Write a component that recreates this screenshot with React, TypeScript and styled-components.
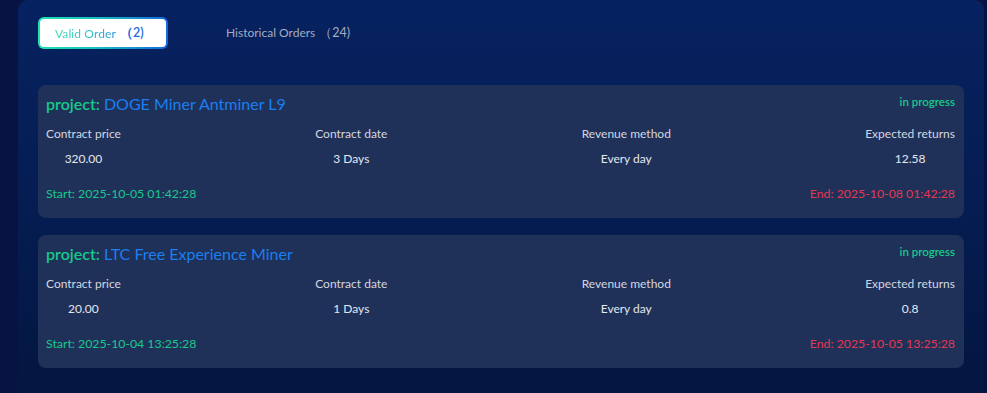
import React from "react";
import styled, { createGlobalStyle } from "styled-components";

const Global = createGlobalStyle`
  html, body { margin: 0; padding: 0; background: #081445; }
  body { font-family: "Lato", "Noto Sans", sans-serif; }
  * { box-sizing: border-box; }
`;

const Page = styled.div`
  display: flex;
  width: 987px;
  height: 393px;
  overflow: hidden;
  background: #071443;
  padding-left: 18px;
  padding-right: 3px;
`;

const Panel = styled.div`
  flex: 1;
  border-radius: 10px 10px 0 0;
  background: linear-gradient(180deg, #072261 0%, #051d52 50%, #041641 100%);
  padding: 17px 20px 0 20px;
`;

const Tabs = styled.div`
  display: flex;
  align-items: center;
  gap: 58px;
  height: 32px;
`;

const ActiveTab = styled.div`
  width: 130px;
  height: 32px;
  border-radius: 6px;
  padding: 2px;
  background: linear-gradient(90deg, #1fe3ad 0%, #17b9c4 50%, #1766e0 100%);
`;

const ActiveInner = styled.div`
  height: 100%;
  border-radius: 4px;
  background: #ffffff;
  display: flex;
  align-items: center;
  padding-left: 15px;
  font-size: 12px;
  letter-spacing: 0.1px;
`;

const GradText = styled.span`
  background: linear-gradient(90deg, #34d9b3 0%, #2bbfcc 60%, #1f8ee0 100%);
  -webkit-background-clip: text;
  background-clip: text;
  color: transparent;
`;

const Count = styled.span<{ $active?: boolean }>`
  margin-left: 4px;
  color: ${(p) => (p.$active ? "#1a6be0" : "#a3acc0")};
  font-size: 12.5px;
  font-weight: ${(p) => (p.$active ? 600 : 400)};
`;

const Tab = styled.div`
  font-size: 12px;
  color: #a3acc0;
`;

const List = styled.div`
  margin-top: 36px;
  display: flex;
  flex-direction: column;
  gap: 17px;
`;

const Card = styled.div`
  background: #1f3159;
  border-radius: 8px;
  padding: 8px 9px 12px 8px;
  height: 133px;
  display: flex;
  flex-direction: column;
`;

const Head = styled.div`
  display: flex;
  justify-content: space-between;
  align-items: flex-start;
  height: 27px;
`;

const Title = styled.div`
  font-size: 16px;
  color: #1a7ff0;
  padding-top: 1px;
`;

const ProjectLabel = styled.span`
  color: #17c98a;
  font-weight: 600;
`;

const Status = styled.div`
  font-size: 11.5px;
  color: #17c98a;
  font-weight: 600;
  padding-top: 2px;
`;

const Stats = styled.div`
  display: flex;
  justify-content: space-between;
  margin-top: 7px;
`;

const Stat = styled.div`
  display: flex;
  flex-direction: column;
  align-items: center;
  gap: 11px;
`;

const Label = styled.div`
  font-size: 12px;
  color: #d3d7e0;
  line-height: 14px;
`;

const Value = styled.div`
  font-size: 12px;
  color: #e4e7ee;
  line-height: 14px;
`;

const Foot = styled.div`
  display: flex;
  justify-content: space-between;
  margin-top: 21px;
  font-size: 12.3px;
  line-height: 14px;
`;

const Start = styled.span`
  color: #18c98b;
`;

const End = styled.span`
  color: #e5384f;
`;

type Order = {
  name: string;
  price: string;
  days: string;
  method: string;
  returns: string;
  start: string;
  end: string;
};

const orders: Order[] = [
  {
    name: "DOGE Miner Antminer L9",
    price: "320.00",
    days: "3 Days",
    method: "Every day",
    returns: "12.58",
    start: "2025-10-05 01:42:28",
    end: "2025-10-08 01:42:28",
  },
  {
    name: "LTC Free Experience Miner",
    price: "20.00",
    days: "1 Days",
    method: "Every day",
    returns: "0.8",
    start: "2025-10-04 13:25:28",
    end: "2025-10-05 13:25:28",
  },
];

export default function App() {
  return (
    <>
      <Global />
      <Page>
        <Panel>
          <Tabs>
            <ActiveTab>
              <ActiveInner>
                <GradText>Valid Order</GradText>
                <Count $active>（2)</Count>
              </ActiveInner>
            </ActiveTab>
            <Tab>
              Historical Orders<Count>（24)</Count>
            </Tab>
          </Tabs>
          <List>
            {orders.map((o) => (
              <Card key={o.name}>
                <Head>
                  <Title>
                    <ProjectLabel>project:</ProjectLabel> {o.name}
                  </Title>
                  <Status>in progress</Status>
                </Head>
                <Stats>
                  <Stat>
                    <Label>Contract price</Label>
                    <Value>{o.price}</Value>
                  </Stat>
                  <Stat>
                    <Label>Contract date</Label>
                    <Value>{o.days}</Value>
                  </Stat>
                  <Stat>
                    <Label>Revenue method</Label>
                    <Value>{o.method}</Value>
                  </Stat>
                  <Stat>
                    <Label>Expected returns</Label>
                    <Value>{o.returns}</Value>
                  </Stat>
                </Stats>
                <Foot>
                  <Start>Start: {o.start}</Start>
                  <End>End: {o.end}</End>
                </Foot>
              </Card>
            ))}
          </List>
        </Panel>
      </Page>
    </>
  );
}
